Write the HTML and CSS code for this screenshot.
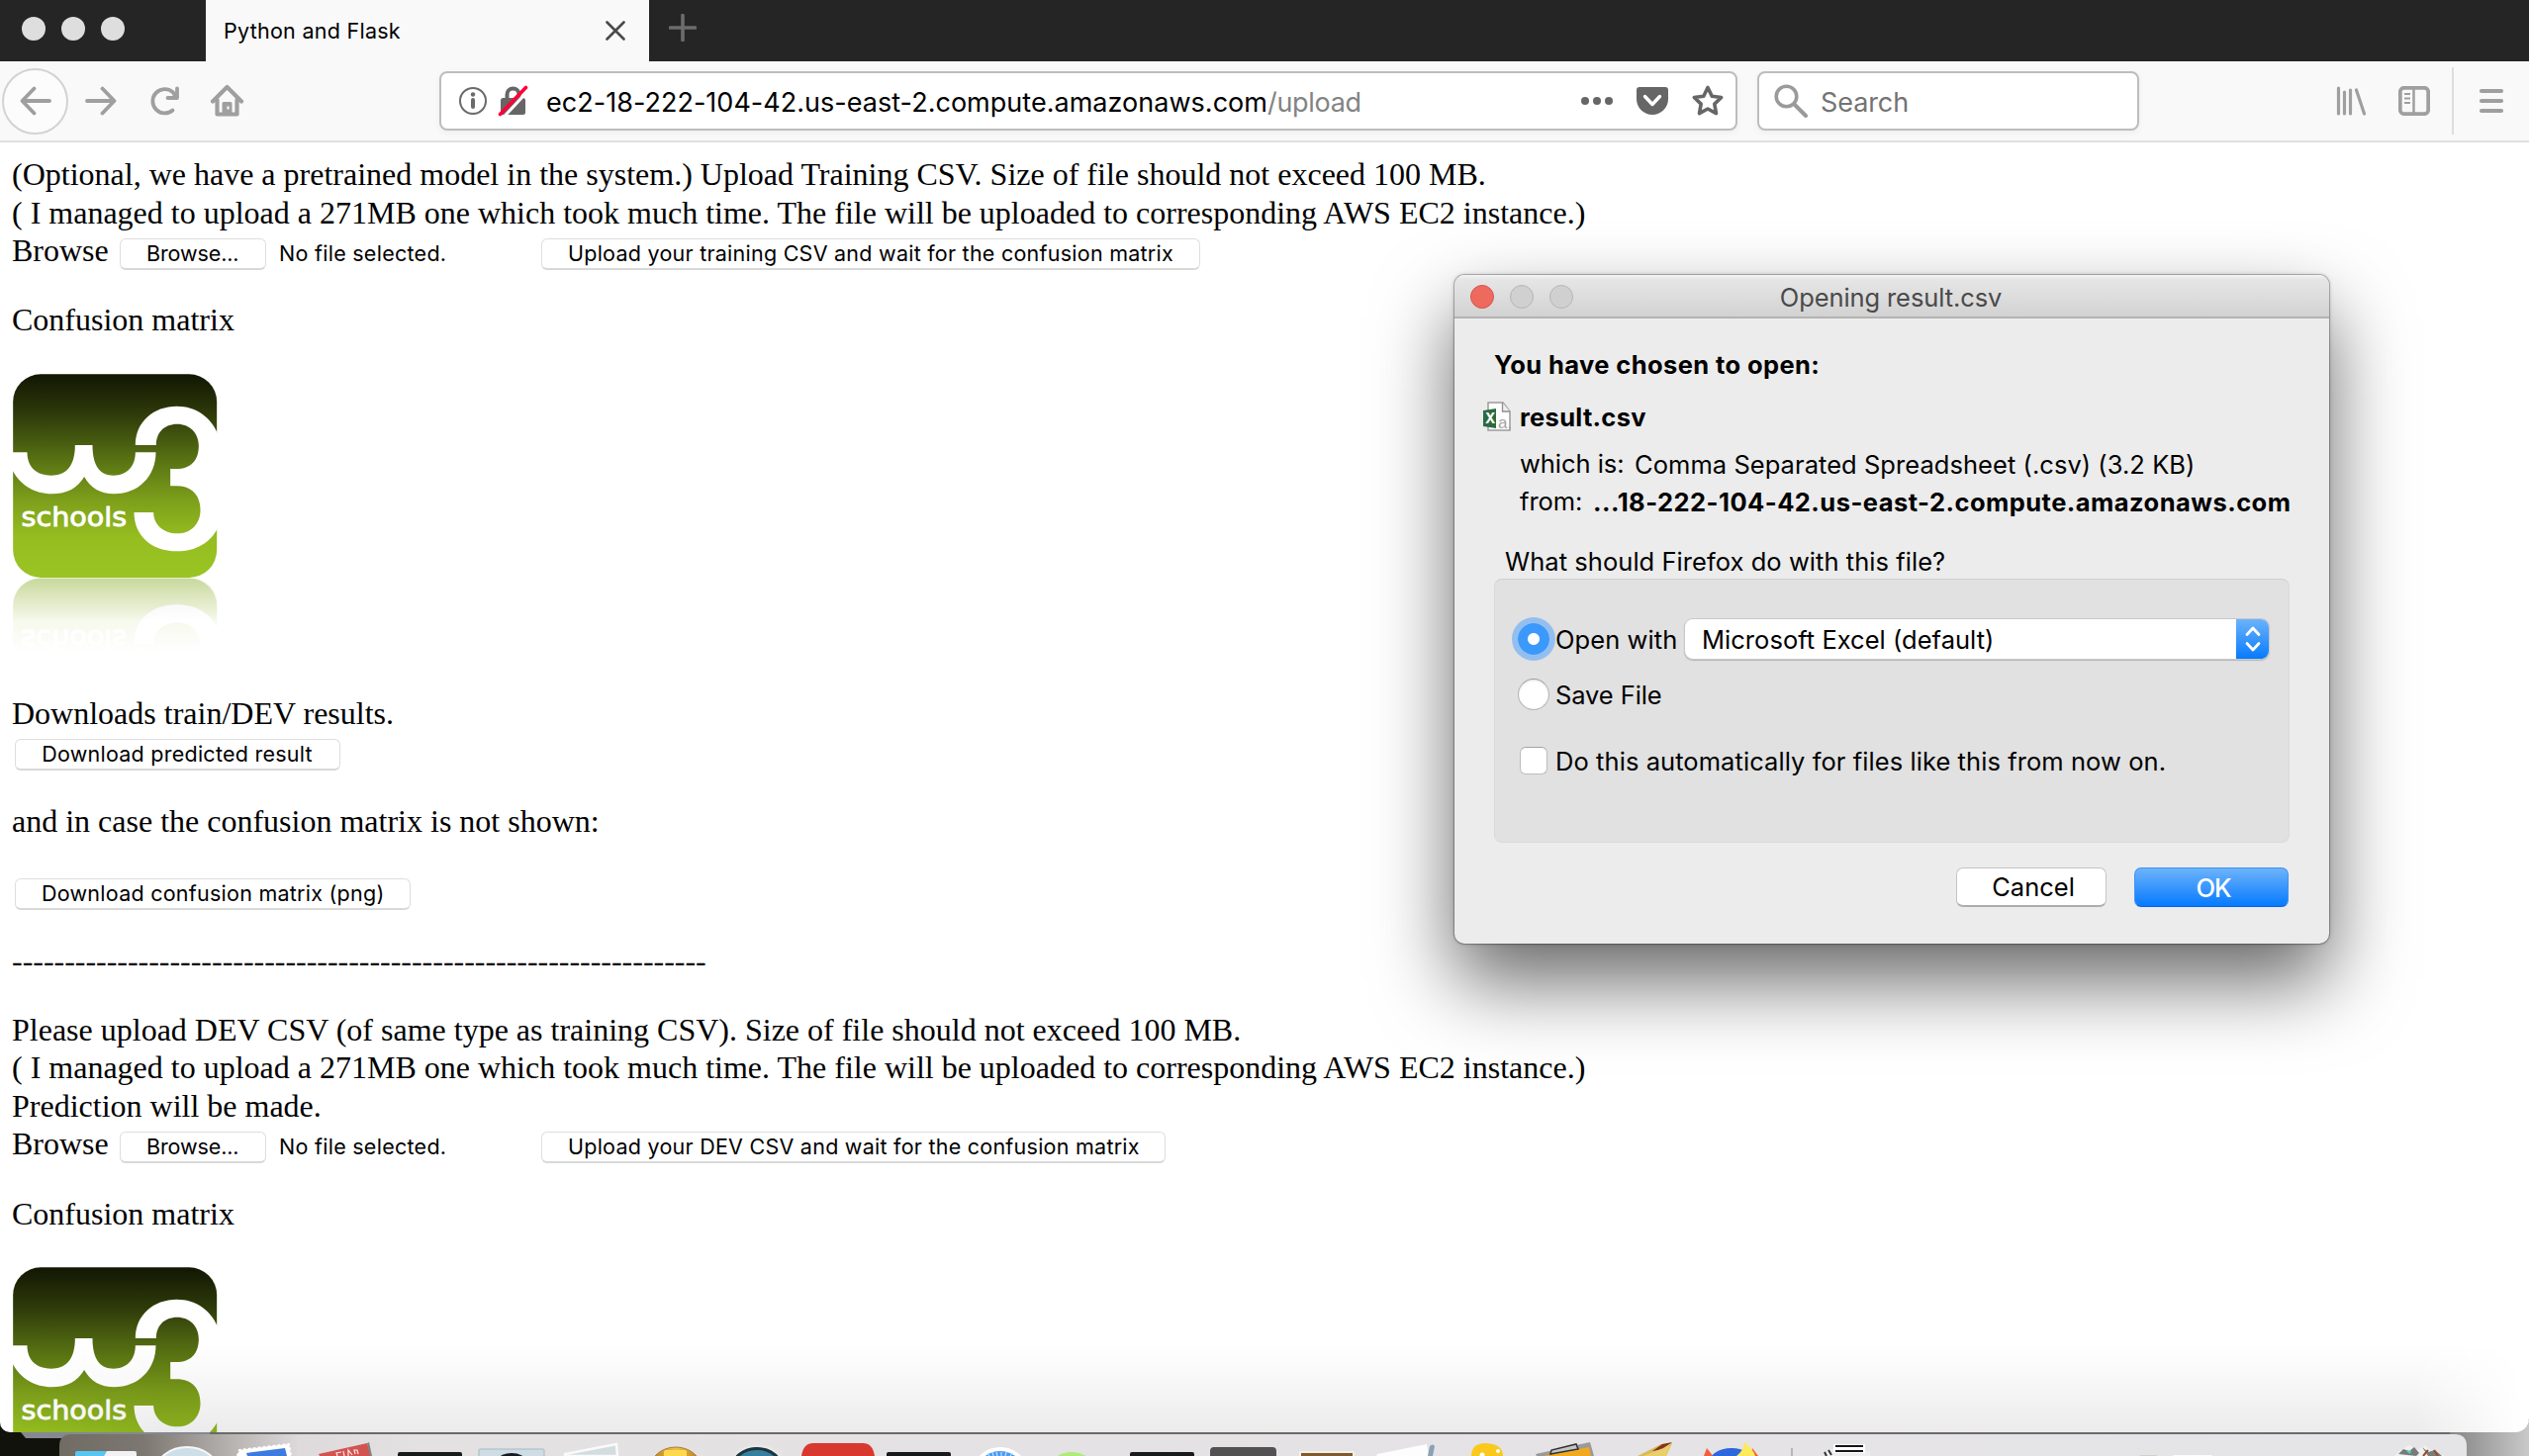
FILE: index.html
```html
<!DOCTYPE html>
<html lang="en">
<head>
<meta charset="utf-8">
<title>Python and Flask</title>
<link rel="stylesheet" href="styles.css">
</head>
<body>
<div class="screen">
  <div class="browser">
    <header class="tabbar">
      <div class="lights"><i></i><i></i><i></i></div>
      <div class="tab">
        <span class="tab-title">Python and Flask</span>
        <svg width="20" height="20" viewBox="0 0 20 20"><path d="M1.500 1.500l17 17M18.500 1.500l-17 17" stroke="#4a4a4a" stroke-width="2.600" stroke-linecap="round"/></svg>
      </div>
      <svg class="newtab" width="28" height="28" viewBox="0 0 28 28"><path d="M14 1.500v25M1.500 14h25" stroke="#6c6c6c" stroke-width="3.600" stroke-linecap="round"/></svg>
    </header>

    <nav class="toolbar">
      <div class="back"><svg width="32" height="30" viewBox="0 0 32 30"><path d="M30 15H3M14.500 2.500L2.500 15l12 12.500" class="ln"/></svg></div>
      <svg class="fwd" width="32" height="30" viewBox="0 0 32 30"><path d="M2 15h27M17.500 2.500l12 12.500-12 12.500" class="ln"/></svg>
      <svg class="reload" width="32" height="32" viewBox="0 0 32 32"><path d="M23.500 25.500A12.200 12.200 0 1 1 23.500 7l3.500 4" class="ln"/><path d="M28 3.500V13H18.500" class="ln"/><path d="M28 6v7h-7z" fill="#9f9f9f"/></svg>
      <svg class="home" width="34" height="34" viewBox="0 0 34 34"><path d="M2 17.500L16.500 3 31 17.500M6.500 16v14.500h20V16" class="ln thick"/><path d="M11.500 31V19.500q0-1.500 1.500-1.500h7q1.500 0 1.500 1.500V31z" fill="#9f9f9f"/><rect x="16.500" y="22.500" width="2" height="3" fill="#fff"/></svg>
      <div class="urlbox">
        <svg width="30" height="30" viewBox="0 0 30 30"><circle cx="15" cy="15" r="13" fill="none" stroke="#6a6a6a" stroke-width="2"/><circle cx="15" cy="8.500" r="2.200" fill="#6a6a6a"/><path d="M15 14v7" stroke="#6a6a6a" stroke-width="4" stroke-linecap="round"/></svg>
        <svg class="lock" width="32" height="32" viewBox="0 0 32 32"><path d="M9.500 15V9.500a6 6 0 0 1 12 0V15" fill="none" stroke="#666" stroke-width="4"/><rect x="3" y="13" width="25" height="17" rx="2.500" fill="#666"/><path d="M5.500 33L31.500 5" stroke="#fff" stroke-width="3"/><path d="M2.500 29.500L28.500 2.500" stroke="#ff0039" stroke-width="3.600" stroke-linecap="round"/></svg>
        <span class="url"><span class="host">ec2-18-222-104-42.us-east-2.compute.amazonaws.com</span><span class="path">/upload</span></span>
        <svg class="dots" width="34" height="10" viewBox="0 0 34 10"><g fill="#666"><circle cx="6" cy="5" r="4"/><circle cx="18" cy="5" r="4"/><circle cx="30" cy="5" r="4"/></g></svg>
        <svg class="pocket" width="32" height="30" viewBox="0 0 32 30"><path d="M3 1h26q3 0 3 3v9a16 16 0 0 1-32 0V4q0-3 3-3z" fill="#666"/><path d="M8.500 10.500l7.500 8 7.500-8" fill="none" stroke="#fff" stroke-width="3.400" stroke-linecap="round" stroke-linejoin="round"/></svg>
        <svg class="star" width="34" height="34" viewBox="0 0 34 34"><path d="M17 3.500l4.200 8.700 9.500 1.300-6.900 6.600 1.700 9.500L17 25l-8.500 4.600 1.700-9.500-6.900-6.600 9.500-1.300z" fill="none" stroke="#666" stroke-width="3.600" stroke-linejoin="round"/></svg>
      </div>
      <div class="searchbox">
        <svg width="34" height="34" viewBox="0 0 34 34"><circle cx="12.500" cy="12.500" r="10.300" fill="none" stroke="#9a9a9a" stroke-width="3.600"/><path d="M20.500 20.500L32 32" stroke="#9a9a9a" stroke-width="4" stroke-linecap="round"/></svg>
        <span class="search">Search</span>
      </div>
      <svg class="library" width="32" height="30" viewBox="0 0 32 30"><path d="M3.500 2v26M9.500 6v22M15.500 4v24M21.500 4l8 24" class="ln thin"/></svg>
      <svg class="sidebar" width="32" height="30" viewBox="0 0 32 30"><rect x="1.800" y="1.800" width="28.400" height="26.400" rx="4" class="ln"/><path d="M15.500 2v26" stroke="#9f9f9f" stroke-width="2.500"/><path d="M6 8h6M6 12.500h6M6 17h6" stroke="#9f9f9f" stroke-width="2"/></svg>
      <div class="menu"><svg width="26" height="28" viewBox="0 0 26 28"><path d="M3 4h20M3 14h20M3 24h20" class="ln thick"/></svg></div>
    </nav>

    <main class="page">
      <p class="line">(Optional, we have a pretrained model in the system.) Upload Training CSV. Size of file should not exceed 100 MB.</p>
      <p class="line">( I managed to upload a 271MB one which took much time. The file will be uploaded to corresponding AWS EC2 instance.)</p>
      <div class="upload"><span class="label">Browse</span><button class="btn browse">Browse...</button><span class="nofile">No file selected.</span><button class="btn training">Upload your training CSV and wait for the confusion matrix</button></div>
      <p class="line heading">Confusion matrix</p>
      <svg class="logo" width="207" height="286" viewBox="40 54 620 858">
        <defs>
          <linearGradient id="green" x1="0" y1="0" x2="0" y2="1"><stop offset="0" stop-color="#121603"/><stop offset=".2" stop-color="#2f3b0a"/><stop offset=".45" stop-color="#5d7914"/><stop offset=".62" stop-color="#7d9f1b"/><stop offset=".8" stop-color="#95bd20"/><stop offset="1" stop-color="#9ac424"/></linearGradient>
          <linearGradient id="fade" gradientUnits="userSpaceOnUse" x1="0" y1="673" x2="0" y2="893"><stop offset="0" stop-color="#e6e6ea" stop-opacity=".6"/><stop offset=".25" stop-color="#f4f4f4" stop-opacity=".74"/><stop offset=".6" stop-color="#fff" stop-opacity=".92"/><stop offset="1" stop-color="#fff"/></linearGradient>
          <g id="w3">
            <rect x="40" y="55" width="618" height="617" rx="84" fill="url(#green)"/>
            <path fill="#fff" d="M38 292H83C83 340 115 362 155 362C200 362 228 335 228 270H281C281 335 305 362 345 362C385 362 411 335 411 292H473C473 365 420 418 347 418C305 418 275 400 256 366C235 400 205 418 157 418C105 418 60 390 38 346Z"/>
            <path fill="#fff" d="M411 270C411 200 465 152 537 152C595 152 640 185 661 236V520C640 565 595 592 537 592C460 592 407 545 407 474H466C466 510 495 538 538 538C580 538 608 508 608 467C608 425 585 394 535 394H517V342H535C580 342 603 315 603 272C603 232 575 206 538 206C498 206 474 232 474 270Z"/>
            <text x="65" y="515" class="schools" textLength="320" lengthAdjust="spacingAndGlyphs">schools</text>
          </g>
        </defs>
        <use href="#w3" transform="matrix(1 0 0 -1 0 1346)"/>
        <path d="M38 912V758A84 84 0 0 1 122 673H576A84 84 0 0 1 662 758V912Z" fill="url(#fade)"/>
        <use href="#w3"/>
      </svg>
      <p class="line downloads">Downloads train/DEV results.</p>
      <button class="btn solo predicted">Download predicted result</button>
      <p class="line incase">and in case the confusion matrix is not shown:</p>
      <button class="btn solo matrix">Download confusion matrix (png)</button>
      <p class="line dashes">------------------------------------------------------------------</p>
      <p class="line please">Please upload DEV CSV (of same type as training CSV). Size of file should not exceed 100 MB.</p>
      <p class="line">( I managed to upload a 271MB one which took much time. The file will be uploaded to corresponding AWS EC2 instance.)</p>
      <p class="line">Prediction will be made.</p>
      <div class="upload"><span class="label">Browse</span><button class="btn browse">Browse...</button><span class="nofile">No file selected.</span><button class="btn dev">Upload your DEV CSV and wait for the confusion matrix</button></div>
      <p class="line heading second">Confusion matrix</p>
      <svg class="logo last" width="207" height="286" viewBox="40 54 620 858"><use href="#w3"/></svg>
    </main>
    <div class="dockshade"></div>
  </div>

  <svg class="dock" width="2556" height="36" viewBox="0 1436 2556 36">
    <defs>
      <linearGradient id="dk" gradientUnits="userSpaceOnUse" x1="60" y1="0" x2="2493" y2="0"><stop offset="0" stop-color="#706b63"/><stop offset=".035" stop-color="#7c7770"/><stop offset=".07" stop-color="#b5b1ae"/><stop offset=".1" stop-color="#dedadc"/><stop offset=".15" stop-color="#e4e1e3"/><stop offset="1" stop-color="#e5e4e6"/></linearGradient>
      <linearGradient id="rt" x1="0" y1="0" x2="1" y2="0"><stop offset="0" stop-color="#858585"/><stop offset="1" stop-color="#c9c9c9"/></linearGradient>
      <linearGradient id="gold" x1="0" y1="0" x2="1" y2="0"><stop offset="0" stop-color="#b57a1c"/><stop offset=".5" stop-color="#efc04c"/><stop offset="1" stop-color="#b57a1c"/></linearGradient>
    </defs>
    <rect y="1436" width="120" height="36" fill="#12120c"/>
    <rect x="120" y="1436" width="2360" height="36" fill="#6b696a"/>
    <rect x="2476" y="1436" width="80" height="36" fill="url(#rt)"/>
    <path d="M21 1448H212V1454H26z" fill="#858893"/>
    <path d="M60 1472V1462q0-12 12-12H2481q12 0 12 12V1472z" fill="url(#dk)"/>
    <path d="M76 1472v-3q0-2 2-2h30l-3 5z" fill="#57c7f2"/><path d="M105 1472l3-5h28q2 0 2 2v3z" fill="#f2f2f4"/>
    <ellipse cx="189" cy="1487" rx="31" ry="24" fill="#cfdfe8" stroke="#f5f7f8" stroke-width="2"/>
    <path d="M240 1472l2-6 50-6 2 12z" fill="#fff" stroke="#fff" stroke-width="2" stroke-dasharray="3 2"/><path d="M250 1472l-1-3 39-5 2 8z" fill="#3e7bdd"/>
    <path d="M323 1472l-1-2 49-11 4 13z" fill="#d25450"/><path d="M371 1459l2-1 3 14h-2z" fill="#7d8386"/><path d="M341 1472l-1-3 5-1M348 1472l-1-5M352 1472l0-6 4 5M359 1470l-1-4 3 0 1 4" stroke="#f8e8e8" stroke-width="1.200" fill="none"/>
    <rect x="402" y="1468" width="65" height="8" rx="2" fill="#181b1b"/>
    <rect x="484" y="1465" width="66" height="10" rx="1" fill="#cddce5" stroke="#a7b9c3"/><ellipse cx="517" cy="1477" rx="14" ry="8" fill="#161a1e"/>
    <path d="M571 1472v-2l52-10 1 12z" fill="#d3dde0" stroke="#fafafa" stroke-width="2.500"/>
    <ellipse cx="683" cy="1485" rx="26" ry="22" fill="url(#gold)" stroke="#a8813c"/><rect x="671" y="1466" width="23" height="9" rx="2" fill="#ffd94d"/>
    <ellipse cx="765" cy="1485" rx="28" ry="23" fill="#2b7695" stroke="#e6e8e9" stroke-width="3"/><ellipse cx="765" cy="1485" rx="25" ry="20.500" fill="#34809e" stroke="#20343d" stroke-width="3"/>
    <path d="M810 1472q2-13 12-13h50q10 0 12 13z" fill="#d9382e"/>
    <rect x="896" y="1468" width="65" height="8" rx="2" fill="#181b1b"/>
    <ellipse cx="1011" cy="1487" rx="25" ry="22" fill="#4d9df0" stroke="#fff" stroke-width="4"/><path d="M1000 1472l-2-3M1004 1472l-1-4M1008 1472l-1-4M1012 1472v-4M1016 1472l1-4M1021 1472l2-3" stroke="#d6eaff" stroke-width="1"/>
    <ellipse cx="1083" cy="1480" rx="19" ry="12" fill="#adec76"/>
    <rect x="1142" y="1468" width="65" height="8" rx="2" fill="#181b1b"/>
    <rect x="1223" y="1463" width="67" height="14" rx="4" fill="#525252"/>
    <rect x="1313" y="1467" width="56" height="8" fill="#f3efe6"/><rect x="1315" y="1469" width="52" height="6" fill="#7e5a2e"/>
    <path d="M1391 1472l1-2 50-10 2 12z" fill="#fdfdfd"/><path d="M1443 1472l2-10q3-3 5 0l-2 10z" fill="#8ba1b5"/>
    <path d="M1487 1472q0-13 15-13 17 1 17 13z" fill="#fbc91d"/><circle cx="1498" cy="1471" r="2.500" fill="#fff"/><circle cx="1514" cy="1467" r="2" fill="#fff"/>
    <path d="M1553 1472l-1-2 55-12 4 14z" fill="#9a9a9a"/><path d="M1560 1472l46-9 2 9z" fill="#f2a91f"/><path d="M1567 1470l1-4 25-6 2 5z" fill="#c4c4c4" stroke="#333" stroke-width="1.500"/>
    <path d="M1655 1472l24-12 11-1-6 13z" fill="#d8bb54"/><path d="M1670 1467l10-7 10-2-8 7z" fill="#873421"/><path d="M1661 1472l20-8 8-5-5 13z" fill="#e8cf6c"/>
    <ellipse cx="1750" cy="1481" rx="24" ry="17" fill="#2d66dd"/><path d="M1722 1472l3-8 4 5 2 3zM1770 1472l1-8 6 8z" fill="#f0603c"/><path d="M1755 1472q7-5 8-14 9 7 11 14z" fill="#ffe95e"/>
    <path d="M1811 1464v8" stroke="#b7b5b8" stroke-width="2"/>
    <path d="M1844 1472q3-8 10-7h18q9 1 18 2v5z" fill="#eee"/><rect x="1853" y="1460" width="32" height="9" fill="#fff"/><path d="M1855 1462h28M1855 1467h28" stroke="#161616" stroke-width="2"/><path d="M1846 1472l-2-4M1848 1466l3 5" stroke="#333" stroke-width="2"/>
    <path d="M2163 1472v-1h17v1z" fill="#d0d3c4"/><path d="M2196 1472v-1h40v1z" fill="#fafafa"/>
    <path d="M2420 1472l6-6 9-5 8 5 8-5 8 7 12 4z" fill="#f0f0ef"/><path d="M2424 1470l5-5 6 2 5-4 5 6-3 3zM2448 1463l6 5 7-2 7 6h-14z" fill="#777c7a"/><path d="M2432 1467l5-1-1 4z" fill="#50d4cb"/><path d="M2449 1472l5-6M2464 1472l-4-6" stroke="#9b4b2a" stroke-width="2"/>
  </svg>

  <section class="dialog">
    <header class="titlebar"><div class="dlights"><i class="close"></i><i></i><i></i></div><span class="dtitle">Opening result.csv</span></header>
    <h2 class="chosen">You have chosen to open:</h2>
    <div class="file">
      <svg width="30" height="32" viewBox="0 0 30 32"><path d="M6 1h15l7 9v19H6z" fill="#fff" stroke="#9c9c9c" stroke-width="1.500"/><path d="M20.500 1v9H28" fill="#eee" stroke="#8f8f8f" stroke-width="1.300"/><path d="M1 9l13-2v20L1 25z" fill="#2c6b40"/><text x="3" y="22" class="xl">X</text><text x="16" y="27" class="ac">a,</text></svg>
      <span class="fname">result.csv</span>
    </div>
    <div class="meta which"><span>which is:</span><span class="kind">Comma Separated Spreadsheet (.csv) (3.2 KB)</span></div>
    <div class="meta from"><span>from:</span><b>...18-222-104-42.us-east-2.compute.amazonaws.com</b></div>
    <p class="what">What should Firefox do with this file?</p>
    <div class="group">
      <div class="opt"><span class="slot"><i class="radio on"></i></span><span class="openwith">Open with</span>
        <div class="select"><span class="app">Microsoft Excel (default)</span><span class="arrows"><svg width="16" height="26" viewBox="0 0 16 26"><path d="M2 8.500L8 2l6 6.500M2 17.500L8 24l6-6.500" fill="none" stroke="#fff" stroke-width="2.800" stroke-linecap="round" stroke-linejoin="round"/></svg></span></div>
      </div>
      <div class="opt save"><span class="slot"><i class="radio"></i></span><span class="text">Save File</span></div>
      <div class="opt auto"><span class="slot"><i class="check"></i></span><span class="text">Do this automatically for files like this from now on.</span></div>
    </div>
    <footer class="actions"><button class="cancel">Cancel</button><button class="ok">OK</button></footer>
  </section>
</div>
</body>
</html>
```
FILE: styles.css
```css
* { box-sizing: border-box; margin: 0; padding: 0; }
body { background: #17170f; font-family: Inter, "Liberation Sans", sans-serif; color: #000; }
svg { flex: none; }
button { font-family: inherit; color: #000; white-space: nowrap; }

.screen { width: 2556px; height: 1472px; overflow: hidden; position: relative; display: flex; flex-direction: column; }
.browser { height: 1448px; flex: none; display: flex; flex-direction: column; background: #fff; overflow: hidden; border-radius: 0 0 14px 10px; position: relative; z-index: 1; }

/* Tab strip */
.tabbar { height: 62px; flex: none; background: #252525; display: flex; align-items: center; }
.lights { width: 208px; padding-left: 22px; display: flex; gap: 16px; }
.lights i { width: 24px; height: 24px; border-radius: 50%; background: #dedede; margin-top: -4px; }
.tab { width: 448px; height: 62px; background: #f9f9f9; display: flex; align-items: center; justify-content: space-between; padding: 0 24px 0 18px; }
.tab-title { font-size: 21.5px; letter-spacing: .27px; }
.newtab { margin-left: 20px; margin-top: -6px; }

/* Navigation toolbar */
.toolbar { height: 82px; flex: none; background: #f9f9f9; border-bottom: 2px solid #e0e0e0; display: flex; align-items: center; padding-left: 2px; }
.ln { fill: none; stroke: #9f9f9f; stroke-width: 3.8; stroke-linecap: round; stroke-linejoin: round; }
.ln.thick { stroke-width: 4.2; }
.ln.thin { stroke-width: 3.2; }
.back { width: 67px; height: 67px; border: 2px solid #d3d3d3; border-radius: 50%; background: #fcfcfc; display: flex; align-items: center; justify-content: center; }
.fwd { margin-left: 17px; }
.reload { margin-left: 33px; margin-right: 1px; }
.home { margin-left: 29px; margin-right: 1px; }
.urlbox, .searchbox { height: 60px; background: #fff; border: 2px solid #bdbdbd; border-radius: 8px; display: flex; align-items: center; box-shadow: 0 2px 6px rgba(0,0,0,.05); }
.urlbox { width: 1312px; margin-left: 196px; padding-left: 17px; }
.lock { margin-left: 10px; }
.url { flex: none; font-size: 27px; width: 1044px; margin-left: 17px; padding-top: 2px; letter-spacing: .025px; }
.path { color: #838383; letter-spacing: -.3px; }
.pocket { margin-left: 24px; }
.star { margin-left: 23px; }
.searchbox { width: 386px; margin-left: 20px; padding-left: 15px; }
.search { font-size: 27px; color: #737373; margin-left: 13px; padding-top: 2px; letter-spacing: -.1px; }
.library { margin-left: 198px; }
.sidebar { margin-left: 32px; }
.menu { height: 68px; margin-left: 22px; padding-left: 25px; border-left: 2px solid #dedede; display: flex; align-items: center; }

/* Page content */
.page { flex: 1; padding: 13px 12px 0; font: 32px/38px "Liberation Serif", serif; overflow: hidden; }
.line { height: 38.5px; white-space: nowrap; }
.upload { height: 38px; display: flex; align-items: flex-start; }
.label { width: 109px; }
.btn { height: 32px; margin-top: 7px; padding: 0 27px 2px; font: 21.5px/28px Inter, sans-serif; letter-spacing: .25px; background: #fff; border: 1px solid #dedede; border-bottom: 2px solid #d8d8d8; border-radius: 6px; text-indent: -1px; }
.browse { width: 148px; letter-spacing: -.1px; }
.training { width: 666px; }
.dev { width: 631px; }
.nofile { width: 264px; padding-left: 13px; margin-right: 14px; font: 21.5px/30px Inter, sans-serif; letter-spacing: .27px; margin-top: 7px; }
.heading { margin-top: 32px; }
.heading.second { margin-top: 33px; }
.logo { display: block; margin: 35px 0 0 .5px; }
.logo.last { margin-top: 34px; }
.schools { font: 80px "DejaVu Sans", sans-serif; fill: #fff; stroke: #fff; stroke-width: 2.5px; }
.downloads { margin-top: 38px; }
.solo { display: block; margin-left: 3px; }
.predicted { margin-top: 6.5px; width: 329px; }
.incase { margin-top: 32.5px; }
.matrix { margin-top: 38px; width: 400px; }
.dashes { margin-top: 32px; letter-spacing: -.025px; }
.please { margin-top: 31.5px; }
.dockshade { position: absolute; left: 0; right: 0; bottom: 0; height: 90px; background: linear-gradient(rgba(0,0,0,0), rgba(0,0,0,.035) 50%, rgba(0,0,0,.08)); -webkit-mask-image: linear-gradient(90deg, transparent, #000 160px, #000 2440px, transparent 2550px); mask-image: linear-gradient(90deg, transparent, #000 160px, #000 2440px, transparent 2550px); }
.dock { display: block; margin-top: -12px; }

/* Download dialog */
.dialog { position: absolute; z-index: 2; left: 1470px; top: 278px; width: 884px; height: 676px; background: #ececec; border-radius: 10px; font-size: 25.5px; line-height: 32px; box-shadow: 0 0 0 1px rgba(0,0,0,.22), 0 0 4px rgba(0,0,0,.25), 0 38px 80px rgba(0,0,0,.6); white-space: nowrap; }
.titlebar { height: 44px; border-radius: 10px 10px 0 0; background: linear-gradient(#f4f4f4, #e6e6e6 4px, #d2d2d2); border-bottom: 2px solid #b3b3b3; display: grid; grid-template-columns: 200px 1fr 200px; align-items: center; padding-top: 2px; }
.dlights { display: flex; gap: 16px; padding-left: 16px; }
.dlights i { width: 24px; height: 24px; border-radius: 50%; background: #d0d0d0; border: 1px solid #b6b6b6; }
.dlights .close { background: #ee6a5f; border-color: #d9534a; }
.dtitle { text-align: center; color: #4a4a4a; letter-spacing: -.1px; padding: 1px 2px 0 0; }
.chosen { margin: 31px 0 0 40px; font-size: 25.5px; font-weight: 700; letter-spacing: .4px; }
.file { margin: 21px 0 0 28px; height: 32px; display: flex; gap: 8px; }
.fname { font-weight: 700; letter-spacing: .3px; }
.xl { font: bold 14px Inter, sans-serif; fill: #fff; }
.ac { font: 17px "Liberation Sans", sans-serif; fill: #a3a3a3; }
.meta { padding-left: 66px; display: flex; }
.meta > span:first-child { letter-spacing: -.05px; }
.which { margin-top: 15px; }
.which > span:first-child { width: 116px; }
.kind { padding-top: 1px; letter-spacing: .05px; }
.from { margin-top: 5px; }
.from > span:first-child { width: 74px; }
.from b { padding-top: 1px; font-weight: 700; letter-spacing: .46px; }
.what { margin: 28px 0 0 51px; letter-spacing: .05px; }
.group { margin: 1px 0 0 40px; width: 804px; height: 267px; background: #e1e1e1; border: 1px solid #dadada; border-top-color: #cfcfcf; border-radius: 8px; padding: 38px 0 0 17px; }
.opt { height: 44px; display: flex; align-items: center; letter-spacing: .07px; }
.slot { width: 44px; display: flex; justify-content: center; }
.save { margin-top: 12px; }
.save .text { letter-spacing: -.1px; }
.auto { margin-top: 23px; }
.openwith, .app, .text { padding-top: 1px; }
.radio { width: 32px; height: 32px; border-radius: 50%; background: #fff; border: 1px solid #b5b5b5; border-top-color: #9c9c9c; box-shadow: inset 0 1px 2px rgba(0,0,0,.12); }
.radio.on { border: 0; background: radial-gradient(circle, #fff 0 5.5px, #3b99fc 6.5px); box-shadow: 0 0 0 6px #93bff0; }
.check { width: 28px; height: 28px; border-radius: 6px; background: #fff; border: 1px solid #bcbcbc; border-top-color: #a3a3a3; }
.openwith { width: 131px; }
.select { width: 590px; height: 40px; background: #fff; border-radius: 8px; box-shadow: 0 0 0 1px #c8c8c8, 0 1px 1px 1px #b5b5b5; padding-left: 17px; display: flex; align-items: center; justify-content: space-between; letter-spacing: .03px; }
.arrows { width: 33px; height: 40px; background: linear-gradient(#6cb3fa, #067aff); border-radius: 0 8px 8px 0; display: flex; align-items: center; justify-content: center; }
.actions { margin-top: 25px; padding-right: 41px; display: flex; justify-content: flex-end; gap: 28px; }
.actions button { height: 40px; border-radius: 7px; font-size: 25.5px; }
.cancel { width: 152px; background: #fff; border: 1px solid #c4c4c4; border-bottom: 2px solid #adadad; text-indent: 4px; }
.actions .ok { width: 156px; color: #fff; font-weight: 500; letter-spacing: -1px; border: 1px solid #3d93f5; border-bottom-color: #0a60e6; background: linear-gradient(#6cb3fa, #067aff); text-indent: 4px; }
```
